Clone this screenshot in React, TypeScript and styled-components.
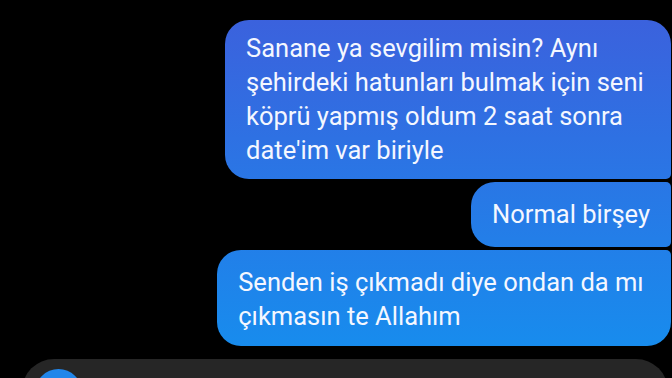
import styled, { createGlobalStyle } from "styled-components";

type Position = "first" | "middle" | "last";

interface IMessage {
  id: number;
  lines: string[];
  position: Position;
}

// lines are kept as the phone wrapped them (trailing space included)
const messages: IMessage[] = [
  {
    id: 1,
    lines: [
      "Sanane ya sevgilim misin? Aynı ",
      "şehirdeki hatunları bulmak için seni ",
      "köprü yapmış oldum 2 saat sonra ",
      "date'im var biriyle",
    ],
    position: "first",
  },
  { id: 2, lines: ["Normal birşey"], position: "middle" },
  {
    id: 3,
    lines: ["Senden iş çıkmadı diye ondan da mı ", "çıkmasın te Allahım"],
    position: "last",
  },
];

const radius = {
  first: "24px 24px 5px 24px",
  middle: "24px 5px 5px 24px",
  last: "24px 5px 24px 24px",
};

const padding = {
  first: "11px 21px 12px",
  middle: "11px 21px 12px",
  last: "15px 21px 13px",
};

export default function App() {
  return (
    <>
      <GlobalStyle />
      <Screen>
        <Thread>
          {messages.map((msg) => (
            <Bubble key={msg.id} $position={msg.position}>
              {msg.lines.map((line, i) => (
                <Line key={i}>{line}</Line>
              ))}
            </Bubble>
          ))}
        </Thread>
        <Composer>
          <ComposerButton />
        </Composer>
      </Screen>
    </>
  );
}

const GlobalStyle = createGlobalStyle`
  html, body {
    margin: 0;
    padding: 0;
    background: #000;
  }
  * {
    box-sizing: border-box;
  }
`;

const Screen = styled.div`
  width: 672px;
  height: 378px;
  overflow: hidden;
  background: #000;
  display: flex;
  flex-direction: column;
  font-family: Roboto, "Noto Sans", sans-serif;
`;

const Thread = styled.div`
  display: flex;
  flex-direction: column;
  align-items: flex-end;
  gap: 3px;
  padding: 20px 1px 0 0;
`;

const Bubble = styled.div<{ $position: Position }>`
  min-height: 65px;
  display: flex;
  flex-direction: column;
  justify-content: center;
  padding: ${(props) => padding[props.$position]};
  border-radius: ${(props) => radius[props.$position]};
  background: linear-gradient(180deg, #3d5fdc 0px, #1490ef 378px);
  background-attachment: fixed;
  color: #f4f7ff;
  font-size: 25.5px;
  line-height: 34px;
`;

const Line = styled.span`
  display: block;
  white-space: pre;
`;

const Composer = styled.div`
  margin: 13px 4px 0 22px;
  height: 60px;
  border-radius: 32px 32px 0 0;
  background: #262626;
  padding: 10px 0 0 13px;
  flex-shrink: 0;
`;

const ComposerButton = styled.div`
  width: 47px;
  height: 47px;
  border-radius: 50%;
  background: #2186ea;
`;
